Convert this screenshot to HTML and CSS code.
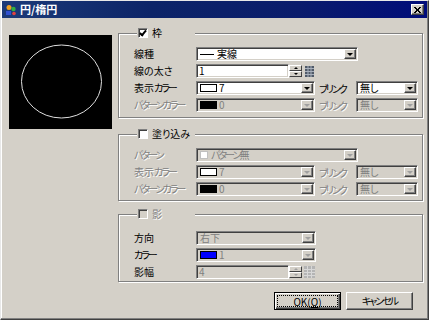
FILE: index.html
```html
<!doctype html>
<html lang="ja">
  <head>
    <meta charset="UTF-8" />
    <title>円/楕円</title>
    <link rel="stylesheet" href="styles.css">
  </head>
  <body>
    <div class="window">
      <!-- Title bar -->
      <div class="titlebar">
        <svg class="app-icon" width="12" height="12" viewBox="0 0 12 12">
          <circle cx="4" cy="3.5" r="2.5" fill="#f0a020" />
          <circle cx="8.5" cy="5" r="2.2" fill="#30b040" />
          <rect x="1" y="7" width="5" height="4" fill="#3050d0" />
          <circle cx="9" cy="9.5" r="1.8" fill="#e04040" />
        </svg>
        <span class="title">円/楕円</span>
        <span class="close-btn">
          <svg width="7" height="6" viewBox="0 0 7 6">
            <path d="M0 0L6 6M1 0L7 6M6 0L0 6M7 0L1 6" stroke="#000" stroke-width="1" />
          </svg>
        </span>
      </div>

      <div class="content">
        <!-- Preview -->
        <div class="preview">
          <svg width="103" height="94" viewBox="0 0 103 94">
            <ellipse cx="52.5" cy="46.5" rx="40" ry="36.5" fill="none" stroke="#e0e0e0" stroke-width="1" />
          </svg>
        </div>

        <div class="settings">
          <!-- 枠 -->
          <fieldset class="group">
            <legend class="group-title"><span class="check checked"></span>枠</legend>
            <div class="group-body">
              <div class="row">
                <span class="label">線種</span>
                <div class="field select select-long">
                  <span class="line-sample"></span>実線
                  <span class="drop"></span>
                </div>
              </div>
              <div class="row">
                <span class="label">線の太さ</span>
                <div class="field input-num">1</div>
                <span class="spin"><span class="spin-up"></span><span class="spin-down"></span></span>
                <svg class="grid-icon" width="9" height="11" viewBox="0 0 9 11">
                  <rect width="9" height="11" fill="#505a68" />
                  <path d="M0 2.5H9M0 5.5H9M0 8.5H9M3 0V11M6 0V11" stroke="#a8b0bc" stroke-width="1" />
                </svg>
              </div>
              <div class="row">
                <span class="label">表示<span class="kana">カラー</span></span>
                <div class="field select select-mid">
                  <span class="swatch swatch-white"></span>7
                  <span class="drop"></span>
                </div>
                <span class="blink-label kana">ブリンク</span>
                <div class="field select select-short">
                  無し
                  <span class="drop"></span>
                </div>
              </div>
              <div class="row">
                <span class="label disabled kana">パターンカラー</span>
                <div class="field select select-mid disabled">
                  <span class="swatch swatch-black"></span>0
                  <span class="drop"></span>
                </div>
                <span class="blink-label disabled kana">ブリンク</span>
                <div class="field select select-short disabled">
                  無し
                  <span class="drop"></span>
                </div>
              </div>
            </div>
          </fieldset>

          <!-- 塗り込み -->
          <fieldset class="group group-fill">
            <legend class="group-title"><span class="check"></span>塗り込み</legend>
            <div class="group-body">
              <div class="row">
                <span class="label disabled kana">パターン</span>
                <div class="field select select-long disabled">
                  <span class="pattern-box"></span><span class="kana">パターン</span>無
                  <span class="drop"></span>
                </div>
              </div>
              <div class="row">
                <span class="label disabled">表示<span class="kana">カラー</span></span>
                <div class="field select select-mid disabled">
                  <span class="swatch swatch-white"></span>7
                  <span class="drop"></span>
                </div>
                <span class="blink-label disabled kana">ブリンク</span>
                <div class="field select select-short disabled">
                  無し
                  <span class="drop"></span>
                </div>
              </div>
              <div class="row">
                <span class="label disabled kana">パターンカラー</span>
                <div class="field select select-mid disabled">
                  <span class="swatch swatch-black"></span>0
                  <span class="drop"></span>
                </div>
                <span class="blink-label disabled kana">ブリンク</span>
                <div class="field select select-short disabled">
                  無し
                  <span class="drop"></span>
                </div>
              </div>
            </div>
          </fieldset>

          <!-- 影 -->
          <fieldset class="group group-shadow">
            <legend class="group-title disabled"><span class="check check-disabled"></span>影</legend>
            <div class="group-body">
              <div class="row">
                <span class="label">方向</span>
                <div class="field select select-shadow disabled">
                  右下
                  <span class="drop"></span>
                </div>
              </div>
              <div class="row">
                <span class="label kana">カラー</span>
                <div class="field select select-shadow disabled">
                  <span class="swatch swatch-blue"></span>1
                  <span class="drop"></span>
                </div>
              </div>
              <div class="row">
                <span class="label">影幅</span>
                <div class="field input-num disabled">4</div>
                <span class="spin spin-disabled"><span class="spin-up"></span><span class="spin-down"></span></span>
                <svg class="grid-icon grid-wide" width="11" height="12" viewBox="0 0 11 12">
                  <rect width="11" height="12" fill="#b4b4b4" />
                  <path d="M0 3.5H11M0 6.5H11M0 9.5H11M3.5 0V12M7.5 0V12" stroke="#d8d8d8" stroke-width="1" />
                </svg>
              </div>
            </div>
          </fieldset>

          <!-- Buttons -->
          <div class="buttons">
            <button class="btn btn-default"><span class="focus">OK(<u>O</u>)</span></button>
            <button class="btn"><span class="kana">キャンセル</span></button>
          </div>
        </div>
      </div>
    </div>
  </body>
</html>
```

FILE: styles.css
```css
/* General */
* {
  box-sizing: border-box;
}

body {
  margin: 0;
  background-color: #d4d0c8;
  font-family: "Noto Sans CJK JP", "Liberation Sans", sans-serif;
  font-size: 10px;
  font-feature-settings: "palt";
  color: #000;
}

.kana {
  letter-spacing: -2px;
}

/* Window */
.window {
  width: 429px;
  height: 320px;
  background-color: #d4d0c8;
  border: 1px solid;
  border-color: #e8e8e8 #404040 #404040 #e8e8e8;
  box-shadow: inset -1px -1px 0 #808080, inset 1px 1px 0 #fff;
  display: flex;
  flex-direction: column;
}

/* Title bar */
.titlebar {
  height: 17px;
  margin: 0 1px;
  display: flex;
  align-items: center;
  padding: 0 3px 0 3px;
  background: linear-gradient(to right, #1c3a78 0%, #0c2468 35%, #0a1c6c 70%, #000c7a 100%);
  color: #fff;
}

.app-icon {
  flex: none;
}

.title {
  margin-left: 3px;
  font-size: 11px;
  font-weight: bold;
  line-height: 17px;
}

.close-btn {
  margin-left: auto;
  width: 13px;
  height: 11px;
  display: flex;
  align-items: center;
  justify-content: center;
  background-color: #d4d0c8;
  border: 1px solid;
  border-color: #fff #404040 #404040 #fff;
  box-shadow: inset -1px -1px 0 #808080;
}

/* Content */
.content {
  flex: 1;
  display: flex;
  gap: 6px;
  padding: 0 5px 0 8px;
}

.preview {
  width: 103px;
  height: 94px;
  margin-top: 17px;
  background-color: #000;
}

.preview svg {
  display: block;
}

.settings {
  width: 307px;
  padding-top: 9px;
  display: flex;
  flex-direction: column;
}

/* Group boxes */
.group {
  margin: 0;
  padding: 8px 0 5px;
  min-width: 0;
  border: 1px solid #808080;
  box-shadow: inset 1px 1px 0 #fff, 1px 1px 0 #fff;
}

.group-fill {
  margin-top: 10px;
  padding-bottom: 4px;
}

.group-shadow {
  margin-top: 7px;
  padding-top: 11px;
  padding-bottom: 2px;
}

.group-title {
  margin-left: 18px;
  padding: 0 0 0 1px;
  width: 58px;
  height: 12px;
  display: flex;
  align-items: center;
  gap: 4px;
  background-color: #d4d0c8;
  line-height: 12px;
}

.group-title.disabled {
  color: #808080;
  text-shadow: 1px 1px 0 #fff;
}

.group-body {
  padding-left: 15px;
  display: flex;
  flex-direction: column;
  gap: 3px;
}

/* Checkboxes */
.check {
  position: relative;
  flex: none;
  width: 10px;
  height: 10px;
  background-color: #fff;
  border: 1px solid;
  border-color: #808080 #fff #fff #808080;
  box-shadow: inset 1px 1px 0 #404040;
}

.check-disabled {
  background-color: #d4d0c8;
}

.check.checked::after {
  content: "";
  position: absolute;
  left: 2px;
  top: 0px;
  width: 2px;
  height: 5px;
  border: solid #000;
  border-width: 0 2px 2px 0;
  transform: rotate(40deg);
}

/* Rows */
.row {
  height: 14px;
  display: flex;
  align-items: center;
}

.label {
  width: 62px;
  white-space: nowrap;
  line-height: 14px;
}

.label.disabled,
.blink-label.disabled {
  color: #808080;
  text-shadow: 1px 1px 0 #fff;
}

.blink-label {
  width: 37px;
  margin-left: 4px;
  white-space: nowrap;
}

/* Fields */
.field {
  height: 14px;
  display: flex;
  align-items: center;
  padding-left: 3px;
  background-color: #fff;
  border: 1px solid;
  border-color: #808080 #fff #fff #808080;
  box-shadow: inset 1px 1px 0 #404040, inset -1px -1px 0 #d4d0c8;
  white-space: nowrap;
  line-height: 12px;
}

.field.disabled {
  background-color: #d4d0c8;
  color: #808080;
}

.select-long {
  width: 162px;
}

.select-mid {
  width: 119px;
}

.select-shadow {
  width: 120px;
}

.select-short {
  width: 62px;
}

.input-num {
  width: 93px;
  padding-left: 2px;
}

.drop {
  margin-left: auto;
  margin-right: 1px;
  width: 12px;
  height: 10px;
  flex: none;
  display: flex;
  align-items: center;
  justify-content: center;
  background-color: #d4d0c8;
  border: 1px solid;
  border-color: #fff #404040 #404040 #fff;
  box-shadow: inset -1px -1px 0 #808080;
}

.drop::after {
  content: "";
  border-left: 3px solid transparent;
  border-right: 3px solid transparent;
  border-top: 3px solid #000;
}

.disabled .drop::after {
  border-top-color: #a0a0a0;
}

.line-sample {
  width: 14px;
  height: 1px;
  margin-right: 3px;
  background-color: #000;
}

.swatch {
  width: 17px;
  height: 8px;
  margin-right: 2px;
  border: 1px solid #000;
}

.swatch-white {
  background-color: #fff;
}

.swatch-black {
  background-color: #000;
}

.swatch-blue {
  background-color: #0000ff;
}

.pattern-box {
  width: 8px;
  height: 8px;
  margin-right: 3px;
  background-color: #fff;
  border: 1px solid #c0c0c0;
}

/* Spin buttons */
.spin {
  width: 13px;
  height: 12px;
  display: flex;
  flex-direction: column;
}

.spin-up,
.spin-down {
  flex: 1;
  display: flex;
  align-items: center;
  justify-content: center;
  background-color: #d4d0c8;
  border: 1px solid;
  border-color: #fff #404040 #404040 #fff;
}

.spin-up::after {
  content: "";
  border-left: 2px solid transparent;
  border-right: 2px solid transparent;
  border-bottom: 2px solid #000;
}

.spin-down::after {
  content: "";
  border-left: 2px solid transparent;
  border-right: 2px solid transparent;
  border-top: 2px solid #000;
}

.spin-disabled .spin-up::after {
  border-bottom-color: #a0a0a0;
}

.spin-disabled .spin-down::after {
  border-top-color: #a0a0a0;
}

.grid-icon {
  margin-left: 3px;
  flex: none;
}

.grid-wide {
  margin-left: 2px;
}

/* Buttons */
.buttons {
  margin-top: 10px;
  padding-right: 10px;
  display: flex;
  justify-content: flex-end;
  gap: 5px;
}

.btn {
  width: 67px;
  height: 18px;
  padding: 0;
  background-color: #d4d0c8;
  border: 1px solid;
  border-color: #fff #404040 #404040 #fff;
  box-shadow: inset -1px -1px 0 #808080;
  font-family: inherit;
  font-size: 10px;
  font-feature-settings: "palt";
  color: #000;
  line-height: 14px;
}

.btn-default {
  border-color: #000;
  box-shadow: inset 1px 1px 0 #fff, inset -1px -1px 0 #404040, inset -2px -2px 0 #808080;
  padding: 2px;
}

.btn-default .focus {
  display: block;
  height: 12px;
  line-height: 11px;
  border: 1px dotted #000;
}
```
